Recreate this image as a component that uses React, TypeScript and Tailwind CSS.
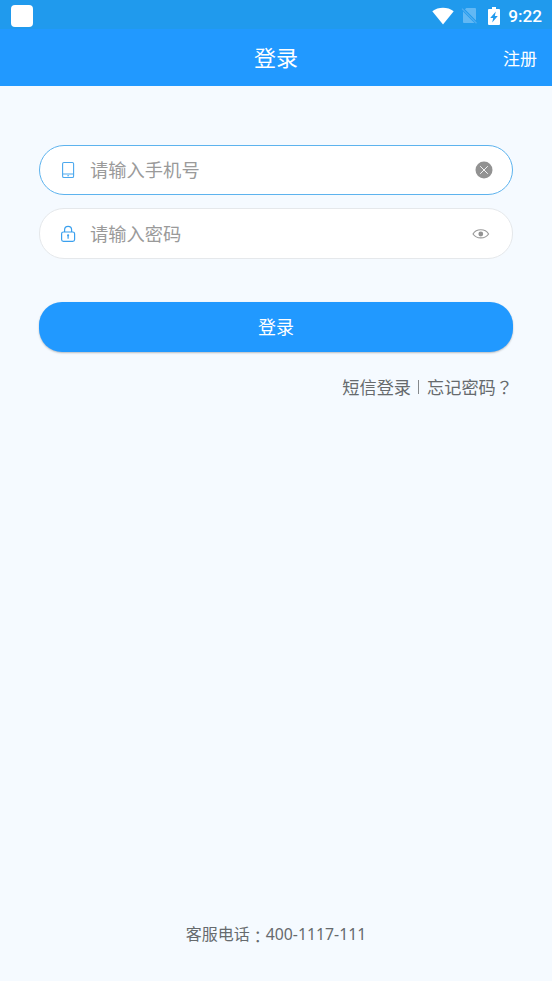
import React from "react";

function StatusBar() {
    return (
        <div className="flex h-[29px] items-center bg-[#209aed] pl-[11px] pr-[10px]">
            <div className="mt-[2px] size-[22px] rounded-[4px] bg-white" />
            <div className="ml-auto flex items-center pt-[2px]">
                <svg width="22" height="18" viewBox="0 0 22 18" fill="#fff">
                    <path d="M.3 4.2C6.500-.3 15.500-.3 21.700 4.200L11 17.500z" />
                </svg>
                <svg className="ml-[7px]" width="17" height="18" viewBox="0 0 17 18">
                    <path d="M5.400 1H14q1 0 1 1v11.600L3.900 2.300zM2 4.500L13.500 16H3q-1 0-1-1z" fill="#62b8f4" />
                    <path d="M1 1.600L15.500 16.300" stroke="#4fadf1" strokeWidth="1.300" />
                </svg>
                <svg className="ml-[10px]" width="12" height="18" viewBox="0 0 12 18">
                    <path d="M4 0h4v2h3q1 0 1 1v14q0 1-1 1H1q-1 0-1-1V3q0-1 1-1h3z" fill="#fff" />
                    <path d="M7.800 4.500L2.200 11h3l-1 4.500L9.800 9h-3z" fill="#209aed" />
                </svg>
                <span className="ml-[8px] font-['Roboto'] text-[17.200px] font-medium leading-[18px] text-white">9:22</span>
            </div>
        </div>
    );
}

function PhoneIcon() {
    return (
        <svg width="16" height="18" viewBox="0 0 16 18" fill="none" stroke="#4ba8ee" strokeWidth="1.100">
            <rect x="2.600" y="1.500" width="11" height="15" rx="1.300" />
            <path d="M2.600 13h11M7.300 14.800h1.800" />
        </svg>
    );
}

function LockIcon() {
    return (
        <svg width="16" height="18" viewBox="0 0 16 18" fill="none" stroke="#3ba0ee" strokeWidth="1.200">
            <rect x="1.600" y="7" width="13" height="9.300" rx="1.800" />
            <path d="M4.600 7V4.800a3.500 3.500 0 0 1 7 0V7M8.100 10.800v3" />
            <circle cx="8.100" cy="10.300" r=".5" />
        </svg>
    );
}

function ClearIcon() {
    return (
        <svg width="18" height="18" viewBox="0 0 18 18">
            <circle cx="9" cy="9" r="8.500" fill="#929292" />
            <path d="M5.200 5.200l7.600 7.600M12.800 5.200l-7.600 7.600" stroke="#fff" strokeWidth=".9" />
        </svg>
    );
}

function EyeIcon() {
    return (
        <svg width="18" height="12" viewBox="0 0 18 12">
            <path d="M1 6C4.300.4 13.300.4 16.600 6 13.300 11.200 4.300 11.200 1 6z" fill="none" stroke="#999" strokeWidth="1.100" />
            <circle cx="8.800" cy="6" r="2.400" fill="#929292" />
        </svg>
    );
}

export default function App() {
    return (
        <div className="flex h-[981px] w-[552px] flex-col bg-[#f5faff] font-['Roboto','Noto_Sans_CJK_SC',sans-serif]">
            <StatusBar />
            <header className="grid h-[57px] grid-cols-3 items-center bg-[#2199ff] px-[15px] pt-[3px] text-white">
                <h1 className="col-start-2 text-center text-[22px] leading-[32px]">登录</h1>
                <a className="text-right text-[17px] leading-[24px]">注册</a>
            </header>

            <main className="flex flex-col px-[39px] pt-[59px]">
                <label className="flex h-[50px] items-center rounded-[25px] border border-[#5db3ee] bg-white pl-[20px] pr-[19px]">
                    <PhoneIcon />
                    <span className="ml-[14px] flex-1 pt-[2px] text-[18.300px] leading-[26px] text-[#9a9a9a]">请输入手机号</span>
                    <ClearIcon />
                </label>
                <label className="mt-[13px] flex h-[51px] items-center rounded-[25px] border border-[#e5e8eb] bg-white pl-[20px] pr-[22px]">
                    <LockIcon />
                    <span className="ml-[14px] flex-1 pt-[2px] text-[18.300px] leading-[26px] text-[#9a9a9a]">请输入密码</span>
                    <EyeIcon />
                </label>
                <button className="mt-[43px] h-[50px] rounded-[23px] bg-[#2199ff] text-[18px] text-white shadow-[0_1px_2px_rgba(0,0,0,0.25)]">
                    登录
                </button>
                <div className="mt-[23px] flex items-center justify-end font-['Noto_Sans_CJK_SC',sans-serif] text-[17.200px] leading-[24px] text-[#666a6d]">
                    <span>短信登录</span>
                    <i className="ml-[7px] mr-[8px] h-[14px] w-px bg-[#85898c]" />
                    <span>
                        忘记密码<span className="font-['Noto_Sans_CJK_TC',sans-serif]">？</span>
                    </span>
                </div>
            </main>

            <footer className="mt-auto flex items-start justify-center pb-[33px] text-[16px] leading-[24px] text-[#666a6d]">
                <span className="pt-px">客服电话</span>
                <span className="pt-[2px] font-['Noto_Sans_CJK_TC',sans-serif]">：</span>
                <span className="font-['Noto_Sans'] text-[15.800px]">400-1117-111</span>
            </footer>
        </div>
    );
}
